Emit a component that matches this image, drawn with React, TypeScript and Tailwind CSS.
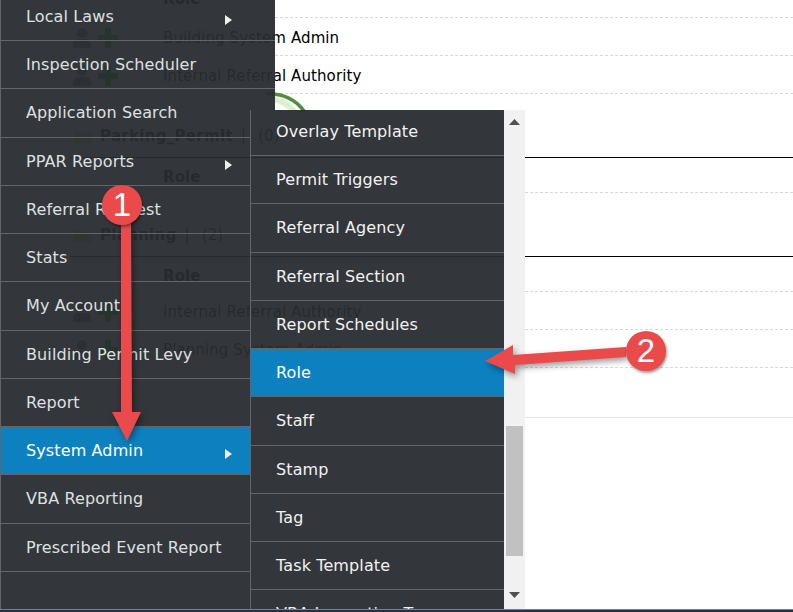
const leftItems = [
  { label: "Local Laws", arrow: true },
  { label: "Inspection Scheduler" },
  { label: "Application Search" },
  { label: "PPAR Reports", arrow: true },
  { label: "Referral Request" },
  { label: "Stats" },
  { label: "My Account" },
  { label: "Building Permit Levy" },
  { label: "Report" },
  { label: "System Admin", arrow: true, active: true },
  { label: "VBA Reporting" },
  { label: "Prescribed Event Report" },
];

const subItems = [
  "Overlay Template",
  "Permit Triggers",
  "Referral Agency",
  "Referral Section",
  "Report Schedules",
  "Role",
  "Staff",
  "Stamp",
  "Tag",
  "Task Template",
  "VBA Inspection Types",
];

function PersonPlus() {
  return (
    <div className="flex w-[93px] items-center gap-[7px] pl-[3px]">
      <svg width="18" height="20" viewBox="0 0 18 20">
        <circle cx="9" cy="5" r="5" fill="#707070" />
        <path d="M0 20v-4c0-3 3-5 6-5h6c3 0 6 2 6 5v4z" fill="#707070" />
      </svg>
      <svg width="20" height="20" viewBox="0 0 20 20">
        <path d="M7 0h6v7h7v6h-7v7H7v-7H0V7h7z" fill="#00b000" />
      </svg>
    </div>
  );
}

function RoleRow({ name }: { name: string }) {
  return (
    <div className="flex h-[38px] items-center border-b border-dashed border-[#d8d8d8] pt-[3px]">
      <PersonPlus />
      <span>{name}</span>
    </div>
  );
}

function RoleHead() {
  return (
    <div className="flex h-[36px] items-center pl-[93px] pt-[2px] font-bold">
      Role
    </div>
  );
}

function GroupHead({ name, count }: { name: string; count: string }) {
  return (
    <div className="flex h-[64px] items-center gap-2 border-b border-black pl-1 pt-[21px]">
      <svg width="18" height="14" viewBox="0 0 18 14">
        <path d="M0 2h7l2 2h9v10H0z" fill="#c9b87a" />
      </svg>
      <span className="font-bold tracking-[0.3px]">{name}</span>
      <span>|</span>
      <span className="ml-1">{count}</span>
    </div>
  );
}

function MenuRow({
  label,
  arrow,
  active,
}: {
  label: string;
  arrow?: boolean;
  active?: boolean;
}) {
  return (
    <div
      className={`relative flex h-[48.25px] shrink-0 items-center whitespace-nowrap border-b border-[#62666b] pl-[25px] pt-[1px] ${
        active ? "bg-[#0d81c0] text-white" : ""
      }`}
    >
      {label}
      {arrow && (
        <svg
          className="absolute left-[224px] top-[22px]"
          width="7"
          height="10"
          viewBox="0 0 7 10"
        >
          <path d="M0 0l7 5-7 5z" fill="#f0f0f0" />
        </svg>
      )}
    </div>
  );
}

export default function App() {
  return (
    <div className="relative flex h-[612px] w-[793px] flex-col overflow-hidden bg-white font-['DejaVu_Sans',sans-serif] text-[15px] tracking-[0.1px] text-black">
      {/* Page behind the menus */}
      <div className="-mt-[20px] ml-[70px] flex flex-1 flex-col">
        <div className="flex h-[38px] items-center border-b border-dashed border-[#d8d8d8] pl-[93px] pt-[2px] font-bold">
          Role
        </div>
        <RoleRow name="Building System Admin" />
        <RoleRow name="Internal Referral Authority" />
        <GroupHead name="Parking_Permit" count="(0)" />
        <div className="h-[35px] border-b border-dashed border-[#d8d8d8]">
          <RoleHead />
        </div>
        <GroupHead name="Planning" count="(2)" />
        <div className="h-[35px] border-b border-dashed border-[#d8d8d8]">
          <RoleHead />
        </div>
        <RoleRow name="Internal Referral Authority" />
        <RoleRow name="Planning System Admin" />
        <div className="h-[50px] border-b border-[#e5e5e5]" />
      </div>
      <div className="h-[3px] border-t border-[#7a818a] bg-[#25304a]" />

      {/* Loading ring, mostly under the menu */}
      <svg
        className="absolute left-[220px] top-[85px]"
        width="100"
        height="30"
        viewBox="0 0 100 30"
      >
        <path d="M52 14a36 36 0 0 1 22 12" fill="none" stroke="#dfeecf" strokeWidth="6" />
        <path d="M48 9a41 41 0 0 1 36 17" fill="none" stroke="#4f8f3f" strokeWidth="3.5" strokeLinecap="round" />
      </svg>

      {/* Main menu */}
      <div className="absolute left-0 top-[-7.25px] flex h-[616.25px] w-[275px] flex-col border-l border-[#62666b] bg-[#282c30]/95 text-[16px] tracking-[0.12px] text-[#dfe0e1] [clip-path:polygon(0_0,100%_0,100%_117.25px,250px_117.25px,250px_100%,0_100%)]">
        {leftItems.map((item) => (
          <MenuRow key={item.label} {...item} />
        ))}
      </div>

      {/* Submenu with its scrollbar */}
      <div className="absolute left-[250px] top-[110px] flex h-[499px] w-[275px] text-[16px] tracking-[0.12px]">
        <div className="flex w-[254px] flex-col overflow-hidden border-l border-[#62666b] bg-[#282c30]/95 text-[#f2f2f2]">
          <div className="-mt-[2.25px] flex flex-col">
            {subItems.map((label) => (
              <MenuRow key={label} label={label} active={label === "Role"} />
            ))}
          </div>
        </div>
        <div className="flex w-[21px] flex-col items-center bg-[#f1f1f1]">
          <svg className="mt-[9px] shrink-0" width="11" height="6" viewBox="0 0 11 6">
            <path d="M5.5 0L11 6H0z" fill="#505050" />
          </svg>
          <div className="mt-[301px] h-[130px] w-[17px] shrink-0 bg-[#c1c1c1]" />
          <svg className="mt-[36px] shrink-0" width="11" height="6" viewBox="0 0 11 6">
            <path d="M0 0h11L5.5 6z" fill="#505050" />
          </svg>
        </div>
      </div>

      {/* Callout arrows */}
      <svg
        className="absolute left-0 top-0 drop-shadow-[2px_3px_3px_rgba(0,0,0,0.4)]"
        width="793"
        height="612"
        viewBox="0 0 793 612"
      >
        <path d="M121 215h10l1 197h9l-14 29-15-29h9z" fill="#ea4a4a" />
        <path d="M485 361l28-16v10l113-8v10l-111 8v9z" fill="#ea4a4a" />
      </svg>
      <div className="absolute left-[102px] top-[185px] flex size-[40px] items-center justify-center rounded-full bg-[#ea4a4a] font-['Liberation_Sans',sans-serif] text-[33px] text-white shadow-[1px_2px_3px_rgba(0,0,0,0.4)]">
        1
      </div>
      <div className="absolute left-[626px] top-[331px] flex size-[40px] items-center justify-center rounded-full bg-[#ea4a4a] font-['Liberation_Sans',sans-serif] text-[33px] text-white shadow-[1px_2px_3px_rgba(0,0,0,0.4)]">
        2
      </div>
    </div>
  );
}
